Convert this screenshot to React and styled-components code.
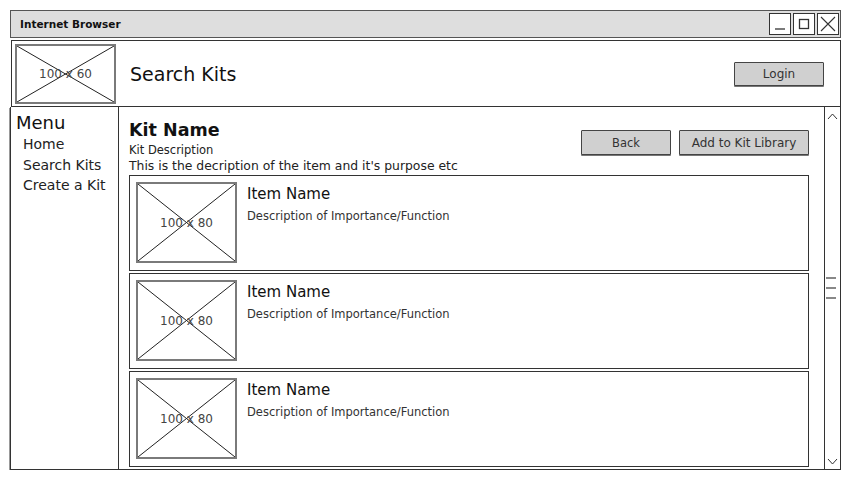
import React from 'react';
import styled, { createGlobalStyle } from 'styled-components';

const items = [1, 2, 3];

const Placeholder = ({ w, h, label }) => (
  <PlaceholderBox $w={w} $h={h}>
    <svg width="100%" height="100%" viewBox="0 0 100 100" preserveAspectRatio="none">
      <line x1="0" y1="0" x2="100" y2="100" stroke="#222" strokeWidth="1" vectorEffect="non-scaling-stroke" />
      <line x1="100" y1="0" x2="0" y2="100" stroke="#222" strokeWidth="1" vectorEffect="non-scaling-stroke" />
    </svg>
    <PlaceholderLabel>{label}</PlaceholderLabel>
  </PlaceholderBox>
);

const Chevron = ({ up }) => (
  <svg width="11" height="7" viewBox="0 0 11 7">
    <path d={up ? 'M1 6 L5.5 1 L10 6' : 'M1 1 L5.5 6 L10 1'} fill="none" stroke="#333" strokeWidth="1" />
  </svg>
);

const App = () => {
  return (
    <>
      <GlobalStyle />
      <Window>
        <TitleBar>
          <WindowTitle>Internet Browser</WindowTitle>
          <WinButtons>
            <WinButton>
              <svg width="14" height="14" viewBox="0 0 14 14">
                <line x1="2" y1="12" x2="12" y2="12" stroke="#333" strokeWidth="1.3" />
              </svg>
            </WinButton>
            <WinButton>
              <svg width="14" height="14" viewBox="0 0 14 14">
                <rect x="2.5" y="2.5" width="9" height="9" fill="none" stroke="#333" strokeWidth="1.3" />
              </svg>
            </WinButton>
            <WinButton>
              <svg width="18" height="18" viewBox="0 0 18 18">
                <path d="M2 2 L16 16 M16 2 L2 16" stroke="#333" strokeWidth="1.1" />
              </svg>
            </WinButton>
          </WinButtons>
        </TitleBar>

        <Header>
          <Placeholder w={101} h={60} label="100 x 60" />
          <PageTitle>Search Kits</PageTitle>
          <Button $w={90} $h={24} $size={12}>Login</Button>
        </Header>

        <BodyRow>
          <Sidebar>
            <MenuTitle>Menu</MenuTitle>
            <MenuItem>Home</MenuItem>
            <MenuItem>Search Kits</MenuItem>
            <MenuItem>Create a Kit</MenuItem>
          </Sidebar>

          <Content>
            <Main>
              <KitHeader>
                <div>
                  <KitName>Kit Name</KitName>
                  <SmallText $size={11.5}>Kit Description</SmallText>
                  <SmallText $size={12.4}>This is the decription of the item and it's purpose etc</SmallText>
                </div>
                <ButtonGroup>
                  <Button $w={90} $h={25} $size={11.5}>Back</Button>
                  <Button $w={130} $h={25} $size={12}>Add to Kit Library</Button>
                </ButtonGroup>
              </KitHeader>

              <CardList>
                {items.map(i => (
                  <Card key={i}>
                    <Placeholder w={101} h={81} label="100 x 80" />
                    <CardText>
                      <ItemName>Item Name</ItemName>
                      <ItemDesc>Description of Importance/Function</ItemDesc>
                    </CardText>
                  </Card>
                ))}
              </CardList>
            </Main>

            <Scrollbar>
              <Arrow><Chevron up /></Arrow>
              <Grip>
                <GripLine />
                <GripLine />
                <GripLine />
              </Grip>
              <Spacer />
              <Arrow><Chevron /></Arrow>
            </Scrollbar>
          </Content>
        </BodyRow>
      </Window>
    </>
  );
};

export default App;

const GlobalStyle = createGlobalStyle`
  html, body {
    margin: 0;
    background: #fff;
    font-family: "DejaVu Sans", Verdana, sans-serif;
    color: #222;
  }
  * {
    box-sizing: border-box;
  }
`;

const Window = styled.div`
  margin: 10px 0 0 10px;
  width: 831px;
  height: 460px;
  display: flex;
  flex-direction: column;
`;

const TitleBar = styled.div`
  height: 28px;
  border: 1px solid #555;
  background: #dedede;
  display: flex;
  align-items: center;
  justify-content: space-between;
  padding: 0 1px 0 9px;
`;

const WindowTitle = styled.div`
  font-size: 10.5px;
  font-weight: bold;
  color: #111;
`;

const WinButtons = styled.div`
  display: flex;
  gap: 2px;
`;

const WinButton = styled.div`
  width: 22px;
  height: 22px;
  border: 1px solid #333;
  background: #fff;
  display: grid;
  place-items: center;
`;

const Header = styled.div`
  margin: 2px 0 0 1px;
  height: 67px;
  border: 1px solid #333;
  display: flex;
  align-items: center;
  padding: 0 16px 0 3px;
`;

const PlaceholderBox = styled.div`
  position: relative;
  flex: none;
  width: ${p => p.$w}px;
  height: ${p => p.$h}px;
  border: 2px solid #7a7a7a;
  background: #fff;
  display: flex;
  align-items: center;
  justify-content: center;

  svg {
    position: absolute;
    inset: 0;
  }
`;

const PlaceholderLabel = styled.span`
  position: relative;
  font-size: 12px;
  color: #444;
`;

const PageTitle = styled.div`
  flex: 1;
  margin-left: 14px;
  font-size: 19px;
  color: #111;
`;

const Button = styled.div`
  width: ${p => p.$w}px;
  height: ${p => p.$h}px;
  background: #d0d0d0;
  border: 1px solid #444;
  box-shadow: 0 1px 0 #777;
  border-radius: 1px;
  display: flex;
  align-items: center;
  justify-content: center;
  font-size: ${p => p.$size}px;
  color: #333;
`;

const BodyRow = styled.div`
  flex: 1;
  display: flex;
  min-height: 0;
`;

const Sidebar = styled.div`
  width: 109px;
  border: 1px solid #333;
  border-top: none;
  box-shadow: -1px 1px 0 #999;
  padding: 4px 0 0 5px;
`;

const MenuTitle = styled.div`
  font-size: 18px;
  line-height: 23px;
  color: #111;
`;

const MenuItem = styled.div`
  margin-left: 7px;
  font-size: 14px;
  line-height: 20.5px;
  color: #222;

  &:first-of-type {
    margin-top: 1px;
  }
`;

const Content = styled.div`
  flex: 1;
  display: grid;
  grid-template-columns: 1fr 16px;
  border-bottom: 1px solid #333;
  border-right: 1px solid #333;
`;

const Main = styled.div`
  padding: 11px 15px 0 10px;
  overflow: hidden;
`;

const KitHeader = styled.div`
  display: flex;
  justify-content: space-between;
  align-items: flex-start;
`;

const KitName = styled.div`
  font-size: 17.5px;
  font-weight: bold;
  line-height: 24px;
  color: #111;
`;

const SmallText = styled.div`
  font-size: ${p => p.$size}px;
  line-height: 16px;
  color: #222;
`;

const ButtonGroup = styled.div`
  display: flex;
  gap: 8px;
  margin-top: 12px;
`;

const CardList = styled.div`
  display: flex;
  flex-direction: column;
  gap: 2px;
  margin-top: 1px;
`;

const Card = styled.div`
  height: 96px;
  border: 1px solid #333;
  padding: 6px;
  display: flex;
  gap: 10px;
`;

const CardText = styled.div`
  padding-top: 2px;
`;

const ItemName = styled.div`
  font-size: 15px;
  line-height: 20px;
  color: #111;
`;

const ItemDesc = styled.div`
  margin-top: 5px;
  font-size: 11.5px;
  line-height: 14px;
  color: #333;
`;

const Scrollbar = styled.div`
  border-left: 1px solid #333;
  display: flex;
  flex-direction: column;
  align-items: center;
  padding: 5px 0 4px;
`;

const Arrow = styled.div`
  height: 8px;
  display: flex;
  align-items: center;
`;

const Grip = styled.div`
  margin-top: 157px;
  display: flex;
  flex-direction: column;
  gap: 8px;
  width: 100%;
  padding-left: 1px;
`;

const GripLine = styled.div`
  width: 10px;
  height: 2px;
  background: #888;
`;

const Spacer = styled.div`
  flex: 1;
`;
